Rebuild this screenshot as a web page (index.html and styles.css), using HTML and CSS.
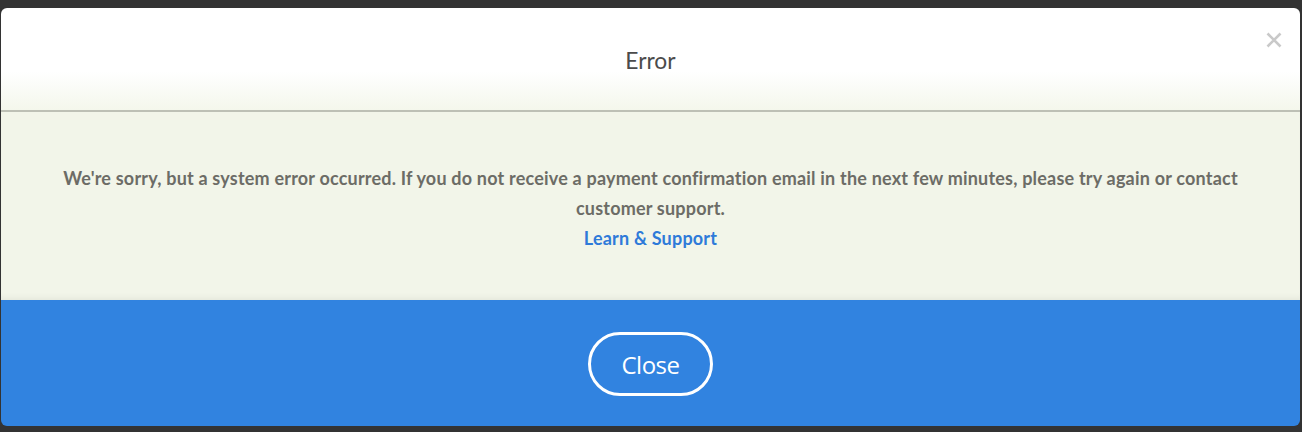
FILE: index.html
```html
<!DOCTYPE html>
<html>
<head>
<meta charset="utf-8">
<link rel="stylesheet" href="styles.css">
</head>
<body>
<div class="modal">
  <div class="header">
    <h1 class="title">Error</h1>
    <button class="close-x" aria-label="Close">
      <svg width="16" height="16" viewBox="0 0 16 16"><path d="M1.5 1.5 L14.5 14.5 M14.5 1.5 L1.5 14.5" stroke="#c9c9c9" stroke-width="2.6" fill="none"/></svg>
    </button>
  </div>
  <div class="body">
    <p class="message">We're sorry, but a system error occurred. If you do not receive a payment confirmation email in the next few minutes, please try again or contact customer support.</p>
    <a class="link" href="#">Learn &amp; Support</a>
  </div>
  <div class="footer">
    <button class="btn">Close</button>
  </div>
</div>
</body>
</html>
```
FILE: styles.css
```css
html, body {
  margin: 0;
  padding: 0;
  background: #333333;
  height: 100%;
}
body {
  padding: 8px 2px 0 1px;
  box-sizing: border-box;
  font-family: "Lato", "Open Sans", sans-serif;
}
.modal {
  display: flex;
  flex-direction: column;
  border-radius: 6px;
  overflow: hidden;
  height: 418px;
}
.header {
  position: relative;
  height: 102px;
  background: linear-gradient(to bottom, #ffffff 0%, #ffffff 62%, #f4f7ec 100%);
  border-bottom: 2px solid #bdc0b5;
  display: flex;
  align-items: center;
  justify-content: center;
}
.title {
  margin: 0;
  font-weight: 400;
  font-size: 24px;
  color: #4b4b4b;
  transform: scaleX(0.95);
}
.close-x {
  position: absolute;
  top: 24px;
  right: 18px;
  background: none;
  border: 0;
  padding: 0;
  width: 16px;
  height: 16px;
  display: flex;
}
.body {
  height: 188px;
  background: #f2f5e9;
  display: flex;
  flex-direction: column;
  align-items: center;
  justify-content: center;
  text-align: center;
  padding: 4px 56px 0;
  box-sizing: border-box;
  box-shadow: inset 0 -6px 6px -4px rgba(0,0,0,0.06);
}
.message {
  margin: 0;
  max-width: 1185px;
  font-size: 18px;
  font-weight: 700;
  letter-spacing: 0.2px;
  line-height: 30px;
  color: #6c6c66;
}
.link {
  font-size: 18px;
  font-weight: 700;
  letter-spacing: 0.2px;
  line-height: 30px;
  color: #2e7ad9;
  text-decoration: none;
}
.footer {
  flex: 1;
  background: #3183e0;
  display: flex;
  align-items: center;
  justify-content: center;
}
.btn {
  width: 125px;
  height: 64px;
  border: 3px solid #ffffff;
  border-radius: 32px;
  background: transparent;
  color: #ffffff;
  font-family: "Open Sans", sans-serif;
  font-size: 24px;
  letter-spacing: -0.5px;
  padding: 0;
  margin-top: 2px;
}
```
